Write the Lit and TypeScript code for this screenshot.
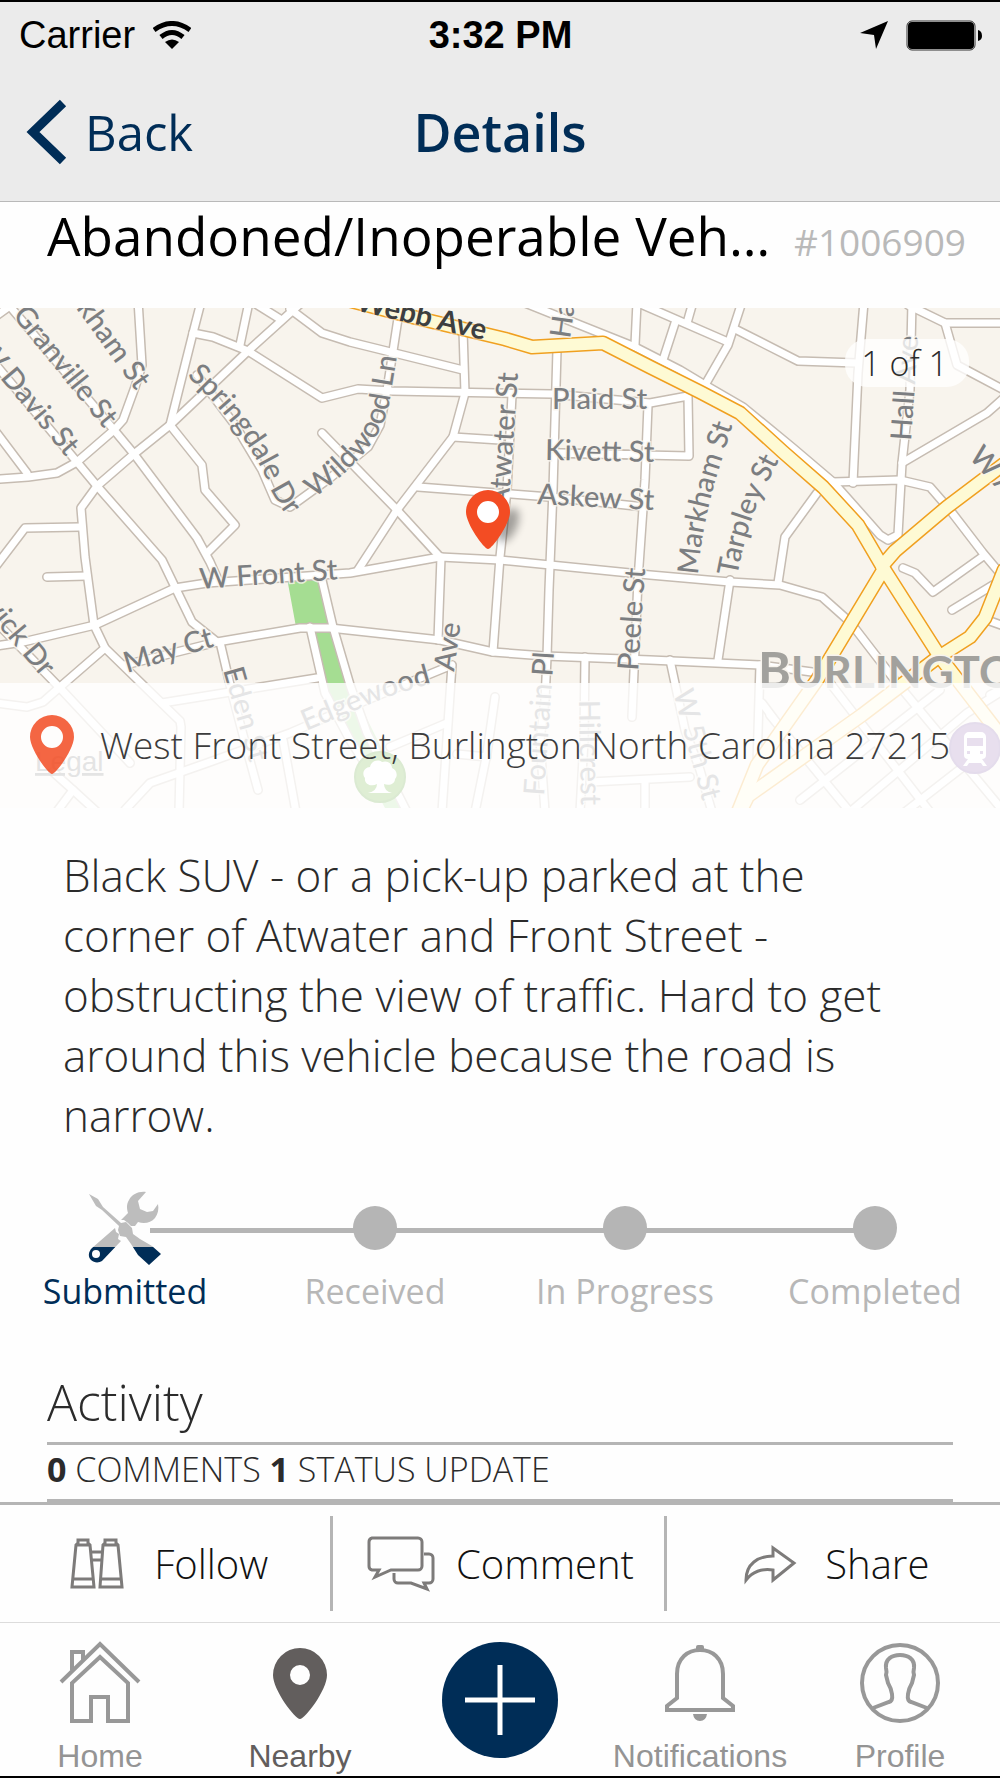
import { LitElement, html, css, svg } from "lit";
import { customElement } from "lit/decorators.js";

/* Minor streets, as polylines in map units. */
const streets: string[] = [
  "138,300 142,365 135,387 123,420 114,430 77,462 57,473 28,477 0,479",
  "300,304 248,351 170,425 134,454 97,486 81,508 85,557 94,625 105,648 180,721 181,727 179,812",
  "8,304 114,430 134,454 197,538 210,562 219,582",
  "-4,365 77,462 97,486 162,560 175,587 192,622 217,642",
  "-4,432 27,473",
  "-4,316 10,306",
  "201,302 193,333 170,425 202,465 205,490 235,525 207,553",
  "193,333 213,337 248,351 322,398 358,389 392,391 552,394 650,403 688,396 689,456 553,453",
  "249,302 240,345",
  "256,304 280,319",
  "290,309 322,333 350,342 463,370",
  "-4,566 25,528 80,527",
  "47,577 87,576",
  "197,375 235,425 262,470 275,500 290,507 330,478 368,447 380,425 387,390 399,312",
  "322,433 397,510 440,557",
  "463,330 465,393 453,437 397,510 358,570",
  "453,437 500,440",
  "418,487 550,497 645,507",
  "512,395 507,490 500,557 493,652",
  "557,350 553,490 549,590 547,657 545,700 540,740 545,812",
  "553,453 650,455",
  "648,405 645,480 638,580 632,717",
  "-4,646 23,642 95,625 175,588 207,583 350,573 440,557 500,560 650,575 730,582 780,585 822,597 850,622 897,683 1004,812",
  "441,557 438,640",
  "125,665 217,642 300,628 330,628 440,640 493,652 545,656 650,660 760,665 812,672",
  "105,648 60,687 43,702 27,707 -4,703",
  "-4,622 60,688 130,763",
  "162,703 317,678",
  "220,642 232,693 247,750 258,790",
  "125,810 150,783 207,763 290,733 350,707 452,665 442,812",
  "390,747 447,723",
  "321,576 333,627 350,685 367,733 407,812",
  "310,627 325,693 350,740 366,765",
  "283,740 296,812",
  "58,810 73,790 97,812",
  "53,772 73,790",
  "495,697 487,753 475,812",
  "457,754 487,757",
  "585,657 584,740 580,812",
  "590,782 690,777",
  "645,781 645,812",
  "670,660 685,730 700,770 712,812",
  "730,580 718,660",
  "760,665 757,765",
  "762,703 777,723",
  "778,583 785,537 817,493",
  "525,303 635,347 680,370 705,385 743,407 793,448 833,482 880,535 888,540 898,535 902,463 910,390 912,302",
  "833,482 900,480 930,487 950,510 983,553 1004,578",
  "853,483 858,373 864,302",
  "902,463 987,413 1004,398",
  "737,330 798,361 857,363",
  "742,302 728,345 705,385",
  "636,302 728,342",
  "693,302 687,323",
  "675,323 663,360",
  "637,302 635,345",
  "908,305 945,323 1004,323",
  "945,323 957,365 1004,390",
  "903,568 915,573 933,592 982,557",
  "952,610 993,585",
  "987,620 1004,626",
  "830,683 930,812",
  "770,715 850,812",
  "850,812 967,713 1004,690",
  "905,812 1004,735",
  "800,800 940,690",
  "990,695 1004,688",
];

/* Main roads. */
const mainRoads: string[] = [
  "340,298 413,317 505,339 532,347 603,343 650,367 700,392 740,413 783,452 823,487 858,525 882,566 940,657 1004,740",
  "882,566 895,551 947,507 1004,464",
  "882,572 817,680 757,765 738,812",
  "1004,570 985,618 970,637 937,658 862,715 748,796 740,812",
];

interface Label {
  text: string;
  x: number;
  y: number;
  angle: number;
  end?: boolean;
}

const labels: Label[] = [
  { text: "Plaid St", x: 552, y: 409, angle: 0 },
  { text: "Kivett St", x: 545, y: 460, angle: 1 },
  { text: "Askew St", x: 537, y: 504, angle: 3 },
  { text: "W Front St", x: 200, y: 589, angle: -4 },
  { text: "May Ct", x: 127, y: 673, angle: -17 },
  { text: "Eden St", x: 223, y: 670, angle: 74 },
  { text: "Atwater St", x: 518, y: 373, angle: -86, end: true },
  { text: "Har", x: 570, y: 339, angle: -82 },
  { text: "Peele St", x: 638, y: 671, angle: -86 },
  { text: "Fountain Pl", x: 544, y: 796, angle: -86 },
  { text: "Hillcrest", x: 579, y: 700, angle: 89 },
  { text: "W 5th St", x: 673, y: 692, angle: 75 },
  { text: "Hall Ave", x: 911, y: 441, angle: -86 },
  { text: "W A", x: 968, y: 457, angle: 48 },
  { text: "Granville St", x: 104, y: 429, angle: 51, end: true },
  { text: "W Davis St", x: 66, y: 457, angle: 50, end: true },
  { text: "Markham St", x: 136, y: 391, angle: 54, end: true },
  { text: "Hardwick Dr", x: 42, y: 678, angle: 50, end: true },
  { text: "Ave", x: 454, y: 672, angle: -82 },
];

const curvedLabels = [
  { id: "springdale", text: "Springdale Dr", d: "M187 376 Q245 430 267 480 Q275 505 310 545" },
  { id: "wildwood", text: "Wildwood Ln", d: "M314 498 Q380 450 389 405 L403 320" },
  { id: "edgewood", text: "Edgewood", d: "M306 731 L380 700 Q420 685 480 672" },
  { id: "markham", text: "Markham St", d: "M698 575 Q702 525 717 475 L742 395" },
  { id: "tarpley", text: "Tarpley St", d: "M737 577 Q748 520 764 490 L804 410" },
];

const pinPath = "M0 37 C-4 37 -22 12 -22 0 A22 22 0 1 1 22 0 C22 12 4 37 0 37 Z M0 -11 A11 11 0 1 0 0 11 A11 11 0 1 0 0 -11 Z";

@customElement("street-map")
export class StreetMap extends LitElement {
  static styles = css`
    :host {
      display: block;
    }
    .map {
      display: block;
      width: 100%;
      height: 100%;
      background: #f8f4ed;
    }
    .line {
      fill: none;
      stroke-linejoin: round;
      stroke-linecap: round;
    }
    .street-edge {
      stroke: #c6bcb2;
      stroke-width: 10;
    }
    .street {
      stroke: #ffffff;
      stroke-width: 7;
    }
    .main-edge {
      stroke: #f0a020;
      stroke-width: 15;
    }
    .main {
      stroke: #fefad4;
      stroke-width: 12;
    }
    .label {
      font: 500 29px "Lato", "Open Sans", sans-serif;
      fill: #7c7e81;
      stroke: #f8f4ed;
      stroke-width: 3;
      stroke-opacity: 0.8;
      paint-order: stroke;
    }
    .label-main {
      font-weight: 700;
      fill: #3d3f40;
      stroke-opacity: 0.4;
    }
    .city {
      font: 700 44px "Lato", "Open Sans", sans-serif;
      fill: #a2a19d;
      stroke: #f8f4ed;
      stroke-width: 3;
      paint-order: stroke;
    }
    .city-cap {
      font-size: 50px;
    }
    .legal {
      font: 400 28px "Liberation Sans", Arial, sans-serif;
      fill: #777;
      text-decoration: underline;
    }
  `;

  render() {
    return html`
      <svg class="map" viewBox="0 308 1000 500" preserveAspectRatio="xMidYMid slice" role="img" aria-label="Map">
        <defs>
          <filter id="soft" x="-50%" y="-50%" width="200%" height="200%"><feGaussianBlur stdDeviation="4" /></filter>
          ${curvedLabels.map((l) => svg`<path id=${l.id} d=${l.d} />`)}
        </defs>
        <path fill="#a5dd92" d="M287 578 L320 578 L332 625 L296 627 Z M312 630 L330 630 L349 683 L380 745 L402 808 L385 808 L350 742 L325 690 Z" />
        ${streets.map((p) => svg`<polyline class="line street-edge" points=${p} />`)}
        ${streets.map((p) => svg`<polyline class="line street" points=${p} />`)}
        ${mainRoads.map((p) => svg`<polyline class="line main-edge" points=${p} />`)}
        ${mainRoads.map((p) => svg`<polyline class="line main" points=${p} />`)}
        ${labels.map(
          (l) => svg`<text class="label" text-anchor=${l.end ? "end" : "start"}
            transform="translate(${l.x} ${l.y}) rotate(${l.angle})">${l.text}</text>`
        )}
        ${curvedLabels.map((l) => svg`<text class="label"><textPath href="#${l.id}">${l.text}</textPath></text>`)}
        <text class="label label-main" text-anchor="end" transform="translate(484 340) rotate(13)">Webb Ave</text>
        <text class="city" x="758" y="688"><tspan class="city-cap">B</tspan>URLINGTON</text>
        <circle cx="380" cy="777" r="25" fill="#5faa2c" stroke="#4c9420" stroke-width="2" />
        <path fill="#fff" d="M377 784 C371 787 364 784 365 778 C361 773 365 767 370 767 C371 761 378 759 382 762 C388 760 392 764 392 768 C397 770 398 776 395 779 C395 784 389 786 384 784 Q384 791 392 793 L368 793 Q377 791 377 784 Z" />
        <circle cx="975" cy="748" r="25" fill="#8a62ac" stroke="#7a529e" stroke-width="2" />
        <path fill="#fff" fill-rule="evenodd" d="M969 732 H981 A5 5 0 0 1 986 737 V755 A4 4 0 0 1 982 759 L987 766 H983 L981 763 H969 L967 766 H963 L968 759 A4 4 0 0 1 964 755 V737 A5 5 0 0 1 969 732 Z M967 738 V746 H983 V738 Z M967 751 H970 V754 H967 Z M980 751 H983 V754 H980 Z" />
        <text class="legal" x="35" y="771">Legal</text>
        <ellipse cx="508" cy="525" rx="9" ry="18" transform="rotate(24 508 525)" fill="#000" opacity="0.35" filter="url(#soft)" />
        <g transform="translate(488 512)">
          <circle r="14" fill="#fff" />
          <path fill="#f34c23" fill-rule="evenodd" d=${pinPath} />
        </g>
      </svg>
    `;
  }
}

const steps = ["Submitted", "Received", "In Progress", "Completed"];

const toolsIcon = html`
  <svg class="tools" viewBox="0 0 76 76" aria-hidden="true">
    <defs>
      <linearGradient id="fill" gradientUnits="userSpaceOnUse" x1="0" y1="0" x2="0" y2="76">
        <stop offset="0.75" stop-color="#bdbdbd" />
        <stop offset="0.75" stop-color="#002d57" />
      </linearGradient>
    </defs>
    <path fill="url(#fill)" fill-rule="evenodd" d="M59 2 C52 1 45 4 42 10 C39 15 40 19 41 23 L34 30 L37 30 L41 33 L44 36 L48 36 L51 32 C57 34 64 33 68 28 C71 24 72 19 71 14 L66 21 L60 22 L53 19 L51 11 Z M28 38 L5 58 C1 62 1 67 4 70 C7 73 12 73 15 71 L34 51 L31 49 L32 44 L29 42 Z M9 60 A4 4 0 1 0 9 68 A4 4 0 1 0 9 60 Z" />
    <path fill="url(#fill)" d="M2 4 L11 9 L16 17 L34 33 L39 32 L45 38 L46 44 L53 49 L65 56 L74 64 L62 75 L51 65 L44 54 L39 47 L33 46 L31 40 L32 36 L15 20 L9 16 Z" />
  </svg>
`;

const followIcon = html`
  <svg class="action-icon" width="64" height="52" viewBox="-4 0 64 52" aria-hidden="true">
    <path d="M2 49 L6 7 L8 5 V2 H18 V5 L20 7 L24 49 Z M30 49 L33 7 L35 5 V2 H46 V5 L48 7 L52 49 Z M3 41 H23 M31 41 H51 M6 7 H20 M33 7 H48 M21 14 H32 M22 22 H31" />
  </svg>
`;

const commentIcon = html`
  <svg class="action-icon" width="65" height="56" viewBox="0 0 65 56" aria-hidden="true">
    <path d="M5 2 H51 A4 4 0 0 1 55 6 V30 A4 4 0 0 1 51 34 H24 L8 41 L12 34 H5 A4 4 0 0 1 2 30 V6 A4 4 0 0 1 5 2 Z M57 18 H62 A4 4 0 0 1 66 22 V43 A4 4 0 0 1 62 47 H57 L60 53 L44 47 H31 A4 4 0 0 1 27 43 V37" />
  </svg>
`;

const shareIcon = html`
  <svg class="action-icon" width="60" height="38" viewBox="-3 0 60 38" aria-hidden="true">
    <path d="M2 35 C2 19 14 11 29 11 V3 L50 18 L29 35 V25 C18 23 8 27 2 35 Z" />
  </svg>
`;

@customElement("app-root")
export class AppRoot extends LitElement {
  static styles = css`
    :host {
      display: block;
      background: #fefefe;
      color: #2b2b2b;
      font-family: "Open Sans", "Noto Sans", sans-serif;
      font-weight: 300;
      --navy: #002d57;
      --rule: #b5b5b5;
    }
    * {
      box-sizing: border-box;
    }
    h1,
    h2,
    p,
    ol {
      margin: 0;
      padding: 0;
      font-weight: inherit;
    }
    button,
    a {
      font: inherit;
      color: inherit;
      background: none;
      border: 0;
      padding: 0;
      text-decoration: none;
      cursor: pointer;
    }
    .page {
      display: flex;
      flex-direction: column;
      border-top: 2px solid #000;
      border-bottom: 2px solid #000;
    }
    .top {
      background: #ebebeb;
      border-bottom: 1px solid #b9b9b9;
    }
    .status {
      display: grid;
      grid-template-columns: 1fr auto 1fr;
      align-items: center;
      height: 66px;
      padding: 0 18px 0 19px;
      color: #000;
      font: 400 38px/66px "Liberation Sans", Arial, sans-serif;
    }
    .carrier,
    .power {
      display: flex;
      align-items: center;
      gap: 18px;
    }
    .power {
      justify-content: flex-end;
    }
    .clock {
      font-weight: 700;
    }
    .nav {
      display: grid;
      grid-template-columns: 1fr auto 1fr;
      align-items: center;
      height: 133px;
      padding: 0 26px 6px;
      color: var(--navy);
    }
    .back {
      display: flex;
      align-items: center;
      gap: 17px;
      justify-self: start;
      font-size: 49px;
      font-weight: 400;
    }
    .nav-title {
      font-size: 52px;
      font-weight: 600;
    }
    .heading {
      display: flex;
      align-items: baseline;
      gap: 16px;
      height: 106px;
      padding: 0 34px 0 47px;
    }
    .title {
      flex: 1;
      min-width: 0;
      overflow: hidden;
      white-space: nowrap;
      text-overflow: ellipsis;
      color: #000;
      font-size: 53px;
      font-weight: 400;
      line-height: 68px;
    }
    .number {
      color: #b9b9b9;
      font-size: 37px;
      font-weight: 400;
      line-height: 40px;
    }
    .map-box {
      position: relative;
      aspect-ratio: 2 / 1;
    }
    .map-view {
      height: 100%;
    }
    .counter {
      position: absolute;
      top: 31px;
      right: 31px;
      padding: 0 21px 0 16px;
      border-radius: 22px;
      background: rgba(255, 255, 255, 0.78);
      font-size: 34px;
      line-height: 48px;
    }
    .address {
      position: absolute;
      inset: auto 0 0 0;
      display: flex;
      align-items: center;
      gap: 26px;
      height: 125px;
      padding: 0 30px 2px;
      background: rgba(255, 255, 255, 0.8);
      color: #3c3c3c;
      font-size: 37px;
      white-space: nowrap;
    }
    .address-pin {
      flex: none;
      opacity: 0.85;
    }
    .description {
      padding: 37px 63px 0;
      font-size: 44px;
      line-height: 60px;
    }
    .steps {
      position: relative;
      display: grid;
      grid-template-columns: repeat(4, 1fr);
      margin-top: 45px;
      list-style: none;
      color: #b7b7b7;
      font-size: 34px;
      font-weight: 400;
      line-height: 50px;
      text-align: center;
    }
    .steps::before {
      content: "";
      position: absolute;
      top: 38px;
      left: 15%;
      right: 12.5%;
      height: 5px;
      background: var(--rule);
    }
    .step {
      display: flex;
      flex-direction: column;
      align-items: center;
    }
    .marker {
      position: relative;
      display: flex;
      align-items: center;
      height: 76px;
    }
    .dot {
      width: 44px;
      height: 44px;
      border-radius: 50%;
      background: var(--rule);
    }
    .tools {
      width: 76px;
      height: 76px;
    }
    .current {
      color: var(--navy);
    }
    .activity {
      margin: 52px 47px 0;
      border-bottom: 3px solid var(--rule);
    }
    .activity-title {
      padding-bottom: 6px;
      font-size: 50px;
      line-height: 68px;
    }
    .totals {
      padding-bottom: 6px;
      border-top: 3px solid var(--rule);
      font-size: 34px;
      line-height: 48px;
    }
    .count {
      font-weight: 700;
    }
    .actions {
      display: grid;
      grid-template-columns: repeat(3, 1fr);
      padding: 11px 0;
      border-top: 3px solid var(--rule);
      color: #111;
      font-size: 40px;
    }
    .action {
      display: flex;
      align-items: center;
      justify-content: center;
      gap: 24px;
      height: 95px;
      padding-left: 4px;
    }
    .action:not(:last-child) {
      border-right: 3px solid var(--rule);
    }
    .action-icon {
      overflow: visible;
      fill: none;
      stroke: #7d7b7a;
      stroke-width: 3;
    }
    .tabs {
      display: grid;
      grid-template-columns: repeat(5, 1fr);
      height: 154px;
      border-top: 1px solid #dcdcdc;
      color: #949494;
      font: 400 32px/36px "Liberation Sans", Arial, sans-serif;
    }
    .tab {
      display: flex;
      flex-direction: column;
      align-items: center;
      justify-content: flex-end;
      gap: 14px;
      padding-bottom: 2px;
    }
    .tab-icon {
      fill: none;
      stroke: #989898;
      stroke-width: 4;
    }
    .solid {
      fill: #989898;
      stroke: none;
    }
    .selected {
      color: #625e5d;
    }
    .add {
      justify-content: center;
      padding: 0;
    }
  `;

  render() {
    return html`
      <div class="page">
        <header class="top">
          <div class="status">
            <span class="carrier">
              Carrier
              <svg width="38" height="28" viewBox="0 0 38 28" aria-hidden="true">
                <path fill="none" stroke="#000" stroke-width="5" d="M1 9 Q19 -4 37 9 M8 16 Q19 7 30 16" />
                <path d="M12 21 Q19 16 26 21 L19 28 Z" />
              </svg>
            </span>
            <span class="clock">3:32 PM</span>
            <span class="power">
              <svg width="28" height="28" viewBox="0 0 28 28" aria-hidden="true"><path d="M28 0 L16 28 L14 14 L0 12 Z" /></svg>
              <svg width="76" height="31" viewBox="0 0 76 31" aria-hidden="true">
                <rect x="1" y="1" width="68" height="29" rx="5" fill="none" stroke="#333" />
                <rect x="2" y="2" width="66" height="27" rx="4" />
                <path d="M72 10 Q76 11 76 16 Q76 20 72 21 Z" />
              </svg>
            </span>
          </div>
          <nav class="nav">
            <button class="back" type="button">
              <svg width="42" height="66" viewBox="0 0 42 66" aria-hidden="true">
                <path fill="none" stroke="#002d57" stroke-width="9" d="M37 4 L7 33 L37 62" />
              </svg>
              Back
            </button>
            <h1 class="nav-title">Details</h1>
          </nav>
        </header>

        <div class="heading">
          <h2 class="title">Abandoned/Inoperable Vehicle</h2>
          <span class="number">#1006909</span>
        </div>

        <div class="map-box">
          <street-map class="map-view"></street-map>
          <span class="counter">1 of 1</span>
          <div class="address">
            <svg class="address-pin" width="44" height="60" viewBox="-22 -22 44 60" aria-hidden="true">
              <path fill="#f34c23" fill-rule="evenodd" d=${pinPath} />
            </svg>
            West Front Street, Burlington North Carolina 27215
          </div>
        </div>

        <p class="description">
          Black SUV - or a pick-up parked at the corner of Atwater and Front Street - obstructing the view of traffic. Hard to get around
          this vehicle because the road is narrow.
        </p>

        <ol class="steps">
          ${steps.map(
            (name, i) => html`
              <li class="step ${i === 0 ? "current" : ""}">
                <span class="marker">${i === 0 ? toolsIcon : html`<span class="dot"></span>`}</span>
                ${name}
              </li>
            `
          )}
        </ol>

        <section class="activity">
          <h2 class="activity-title">Activity</h2>
          <p class="totals"><b class="count">0</b> COMMENTS <b class="count">1</b> STATUS UPDATE</p>
        </section>

        <div class="actions">
          <button class="action" type="button">${followIcon} Follow</button>
          <button class="action" type="button">${commentIcon} Comment</button>
          <button class="action" type="button">${shareIcon} Share</button>
        </div>

        <nav class="tabs">
          <a class="tab" href="#home">
            <svg class="tab-icon" width="82" height="84" viewBox="0 0 82 84" aria-hidden="true">
              <path d="M2 42 L41 4 L80 42 M13 30 V12 H24 V20 M13 81 V43 L41 17 L69 43 V81 H49 V57 H32 V81 Z" />
            </svg>
            Home
          </a>
          <a class="tab selected" href="#nearby" aria-current="page">
            <svg width="54" height="76" viewBox="0 0 54 76" aria-hidden="true">
              <path fill="#625e5d" fill-rule="evenodd" d="M27 71 C22 71 0 42 0 27 A27 27 0 1 1 54 27 C54 42 32 71 27 71 Z M27 17 A10 10 0 1 0 27 37 A10 10 0 1 0 27 17 Z" />
            </svg>
            Nearby
          </a>
          <button class="tab add" type="button" aria-label="Add">
            <svg width="116" height="116" viewBox="0 0 116 116" aria-hidden="true">
              <circle cx="58" cy="58" r="58" fill="#002d57" />
              <path stroke="#fff" stroke-width="5" d="M23 58 H93 M58 23 V93" />
            </svg>
          </button>
          <a class="tab" href="#notifications">
            <svg class="tab-icon" width="72" height="80" viewBox="0 0 72 80" aria-hidden="true">
              <path d="M3 66 V62 L13 54 V30 C13 14 24 6 36 6 S59 14 59 30 V54 L69 62 V66 Z" />
              <path class="solid" d="M32 5 V3 Q32 1 34 1 H38 Q40 1 40 3 V7 H32 Z M29 70 H43 Q42 77 36 77 Q30 77 29 70 Z" />
            </svg>
            Notifications
          </a>
          <a class="tab" href="#profile">
            <svg class="tab-icon" width="80" height="82" viewBox="0 0 80 82" aria-hidden="true">
              <circle cx="40" cy="41" r="38" />
              <path d="M13 66 L29 60 Q33 59 32 52 Q31 46 28 41 Q27 37 26 33 Q27 30 26 26 C25 17 32 13 40 13 S55 17 54 26 Q53 30 54 33 Q53 37 52 41 Q49 46 48 52 Q47 59 51 60 L67 66" />
            </svg>
            Profile
          </a>
        </nav>
      </div>
    `;
  }
}
